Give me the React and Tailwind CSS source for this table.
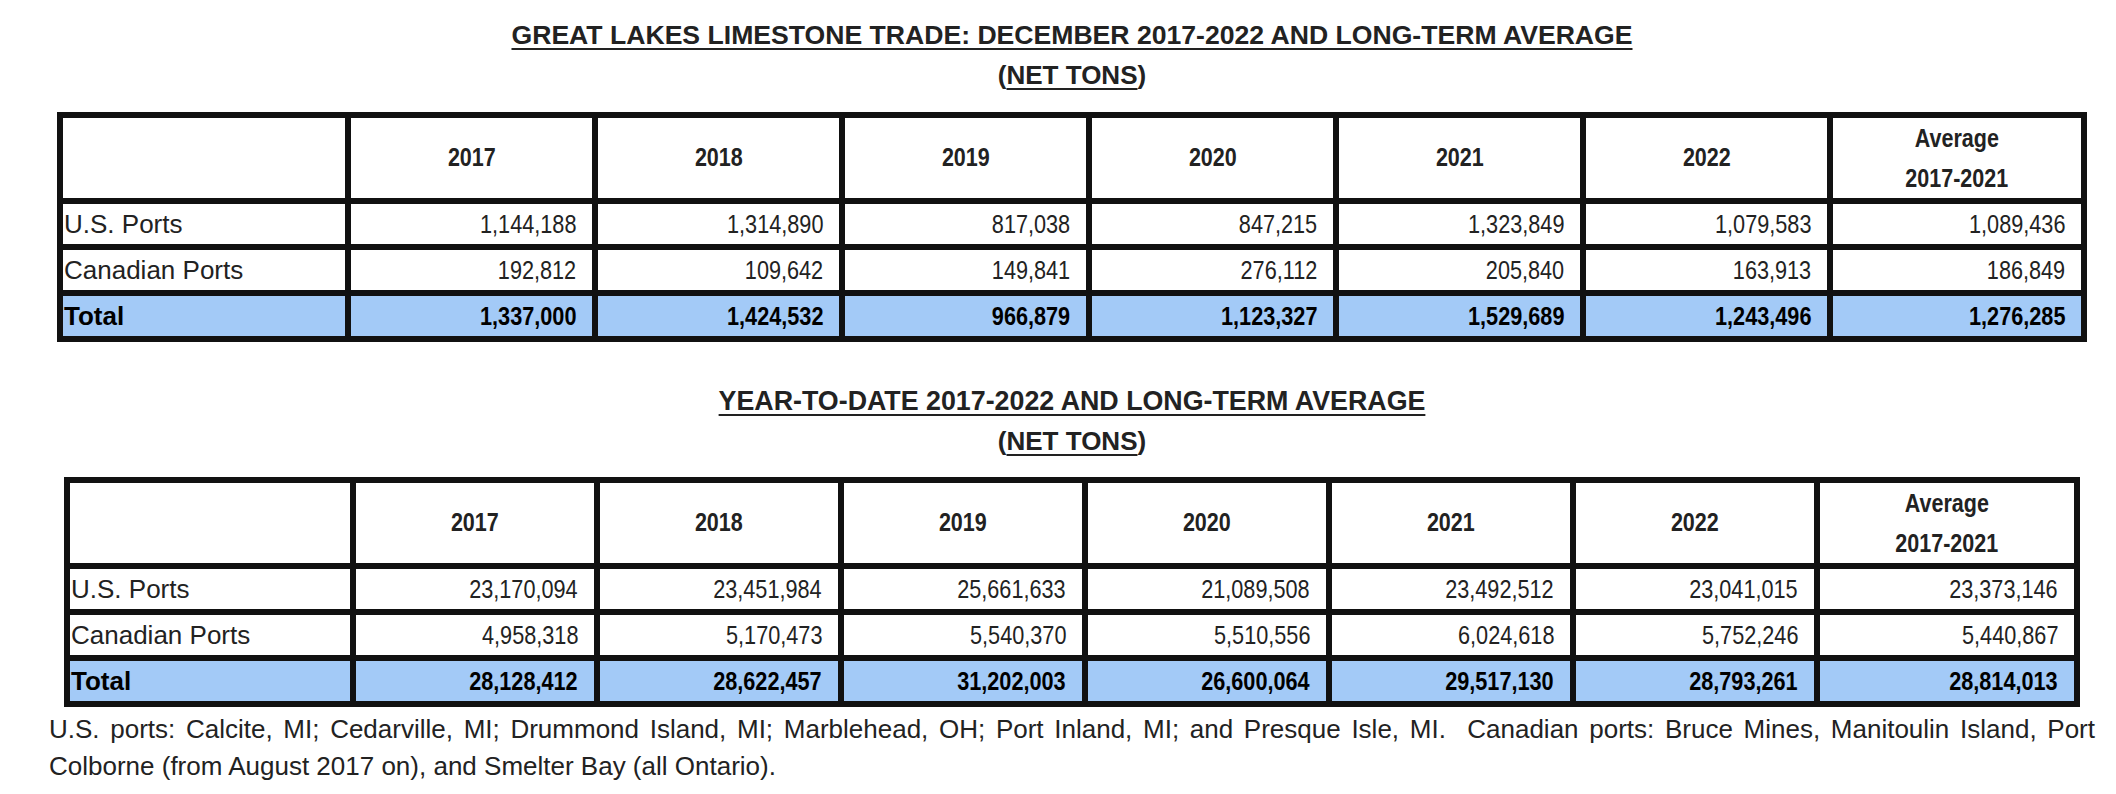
import React from "react";

const years = ["2017", "2018", "2019", "2020", "2021", "2022"];

const t1 = {
  us: ["1,144,188", "1,314,890", "817,038", "847,215", "1,323,849", "1,079,583", "1,089,436"],
  ca: ["192,812", "109,642", "149,841", "276,112", "205,840", "163,913", "186,849"],
  total: ["1,337,000", "1,424,532", "966,879", "1,123,327", "1,529,689", "1,243,496", "1,276,285"],
};

const t2 = {
  us: ["23,170,094", "23,451,984", "25,661,633", "21,089,508", "23,492,512", "23,041,015", "23,373,146"],
  ca: ["4,958,318", "5,170,473", "5,540,370", "5,510,556", "6,024,618", "5,752,246", "5,440,867"],
  total: ["28,128,412", "28,622,457", "31,202,003", "26,600,064", "29,517,130", "28,793,261", "28,814,013"],
};

const sans = "font-['Liberation_Sans',Arial,sans-serif]";

function Num({ children }) {
  return <span className="inline-block scale-x-[0.85] origin-right whitespace-nowrap">{children}</span>;
}

function Head({ children }) {
  return <span className="inline-block scale-x-[0.86] origin-center whitespace-nowrap">{children}</span>;
}

function DataTable({ data, cols }) {
  return (
    <div className={`grid ${cols} grid-rows-[80px_40px_40px_40px] gap-[6px] p-[6px] bg-[#111]`}>
      <div className="bg-white" />
      {years.map((y) => (
        <div key={y} className="bg-white flex items-center justify-center font-bold text-[25px] text-[#222]">
          <Head>{y}</Head>
        </div>
      ))}
      <div className="bg-white flex flex-col items-center justify-center font-bold text-[25px] leading-[40px] text-[#222]">
        <Head>Average</Head>
        <Head>2017-2021</Head>
      </div>

      <div className="bg-white flex items-center pl-px text-[26px] text-[#222]">U.S. Ports</div>
      {data.us.map((v, i) => (
        <div key={"u" + i} className="bg-white flex items-center justify-end pr-4 text-[25.5px] text-[#222]">
          <Num>{v}</Num>
        </div>
      ))}

      <div className="bg-white flex items-center pl-px text-[26px] text-[#222]">Canadian Ports</div>
      {data.ca.map((v, i) => (
        <div key={"c" + i} className="bg-white flex items-center justify-end pr-4 text-[25.5px] text-[#222]">
          <Num>{v}</Num>
        </div>
      ))}

      <div className="bg-[#a3caf7] flex items-center pl-px font-bold text-[26px] text-black">Total</div>
      {data.total.map((v, i) => (
        <div key={"t" + i} className="bg-[#a3caf7] flex items-center justify-end pr-4 font-bold text-[25.5px] text-black">
          <Num>{v}</Num>
        </div>
      ))}
    </div>
  );
}

export default function App() {
  return (
    <div className={`w-[2116px] h-[794px] bg-white ${sans} text-[#222] overflow-hidden`}>
      <div className="ml-[57px] w-[2030px] pt-[15px]">
        <div className="text-center leading-[40px] font-bold">
          <div className="text-[26.6px] underline decoration-2 underline-offset-[4px]">
            GREAT LAKES LIMESTONE TRADE: DECEMBER 2017-2022 AND LONG-TERM AVERAGE
          </div>
          <div className="text-[26px]">
            (<span className="underline decoration-2 underline-offset-[4px]">NET TONS</span>)
          </div>
        </div>
        <div className="mt-[17px]">
          <DataTable data={t1} cols="grid-cols-[282px_repeat(6,241px)_248px]" />
        </div>
      </div>

      <div className="ml-[64px] w-[2016px] mt-[39px]">
        <div className="text-center leading-[40px] font-bold">
          <div className="text-[26.8px] underline decoration-2 underline-offset-[4px]">
            YEAR-TO-DATE 2017-2022 AND LONG-TERM AVERAGE
          </div>
          <div className="text-[26px]">
            (<span className="underline decoration-2 underline-offset-[4px]">NET TONS</span>)
          </div>
        </div>
        <div className="mt-[16px]">
          <DataTable data={t2} cols="grid-cols-[280px_repeat(6,238px)_254px]" />
        </div>
      </div>

      <div className="ml-[49px] w-[2046px] mt-[4px] text-[26px] leading-[37px] text-[#222]">
        <div className="text-justify [text-align-last:justify]">
          U.S. ports: Calcite, MI; Cedarville, MI; Drummond Island, MI; Marblehead, OH; Port Inland, MI; and Presque Isle, MI.{"\u00a0 "}Canadian ports: Bruce Mines, Manitoulin Island, Port
        </div>
        <div>Colborne (from August 2017 on), and Smelter Bay (all Ontario).</div>
      </div>
    </div>
  );
}
